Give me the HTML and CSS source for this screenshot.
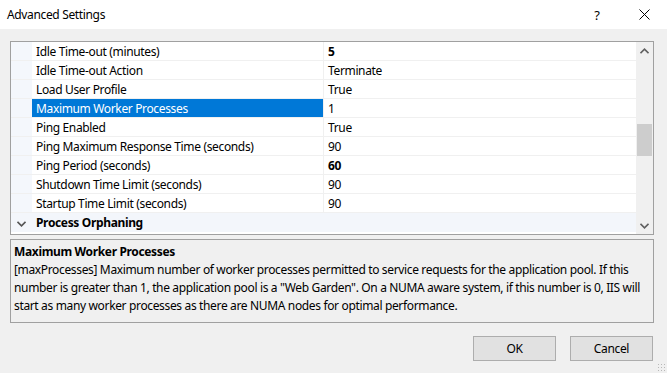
FILE: index.html
```html
<!DOCTYPE html>
<html>
<head>
<meta charset="utf-8">
<link rel="stylesheet" href="styles.css">
</head>
<body>
<div class="dialog">
  <div class="titlebar">
    <span class="title">Advanced Settings</span>
    <span class="tb-help">?</span>
    <span class="tb-close">
      <svg width="11" height="11" viewBox="0 0 11 11"><path d="M0.5 0.5 L10.5 10.5 M10.5 0.5 L0.5 10.5" stroke="#000" stroke-width="1" fill="none"/></svg>
    </span>
  </div>
  <div class="content">
    <div class="grid">
      <div class="rows">
        <div class="row"><div class="gut"></div><div class="name">Idle Time-out (minutes)</div><div class="val bold">5</div></div>
        <div class="row"><div class="gut"></div><div class="name">Idle Time-out Action</div><div class="val">Terminate</div></div>
        <div class="row"><div class="gut"></div><div class="name">Load User Profile</div><div class="val">True</div></div>
        <div class="row selected"><div class="gut"></div><div class="name">Maximum Worker Processes</div><div class="val">1</div></div>
        <div class="row"><div class="gut"></div><div class="name">Ping Enabled</div><div class="val">True</div></div>
        <div class="row"><div class="gut"></div><div class="name">Ping Maximum Response Time (seconds)</div><div class="val">90</div></div>
        <div class="row"><div class="gut"></div><div class="name">Ping Period (seconds)</div><div class="val bold">60</div></div>
        <div class="row"><div class="gut"></div><div class="name">Shutdown Time Limit (seconds)</div><div class="val">90</div></div>
        <div class="row"><div class="gut"></div><div class="name">Startup Time Limit (seconds)</div><div class="val">90</div></div>
        <div class="row category"><div class="gut chev"><svg width="9" height="6" viewBox="0 0 9 6"><path d="M0.5 0.8 L4.5 4.8 L8.5 0.8" stroke="#555" stroke-width="1.6" fill="none"/></svg></div><div class="cat-name">Process Orphaning</div></div>
      </div>
      <div class="scrollbar">
        <div class="sb-arrow"><svg width="9" height="6" viewBox="0 0 9 6"><path d="M0.5 5.2 L4.5 1.2 L8.5 5.2" stroke="#606060" stroke-width="1.6" fill="none"/></svg></div>
        <div class="sb-track"><div class="sb-thumb"></div></div>
        <div class="sb-arrow"><svg width="9" height="6" viewBox="0 0 9 6"><path d="M0.5 0.8 L4.5 4.8 L8.5 0.8" stroke="#606060" stroke-width="1.6" fill="none"/></svg></div>
      </div>
    </div>
    <div class="desc">
      <div class="desc-title">Maximum Worker Processes</div>
      <div class="desc-text">[maxProcesses] Maximum number of worker processes permitted to service requests for the application pool. If this number is greater than 1, the application pool is a "Web Garden". On a NUMA aware system, if this number is 0, IIS will start as many worker processes as there are NUMA nodes for optimal performance.</div>
    </div>
    <div class="buttons">
      <button class="btn">OK</button>
      <button class="btn">Cancel</button>
    </div>
  </div>
  <div class="grip"></div>
</div>
</body>
</html>
```
FILE: styles.css
```css
* { box-sizing: border-box; }
html, body { margin: 0; padding: 0; }
body {
  width: 667px;
  height: 373px;
  overflow: hidden;
  background: #f0f0f0;
  font-family: "Noto Sans", "Open Sans", sans-serif;
  font-size: 12px;
  letter-spacing: -0.35px;
  color: #000;
}
.dialog { position: relative; width: 667px; height: 373px; }
.titlebar {
  height: 29px;
  background: #fff;
  display: flex;
  align-items: center;
  padding-left: 7px;
}
.title { flex: 1; font-size: 12px; }
.tb-help { width: 46px; text-align: center; font-size: 13px; margin-right: 4px; }
.tb-close { width: 40px; display: flex; justify-content: center; margin-right: 3px; }
.content { padding: 12px 13px 0 10px; }
.grid {
  height: 194px;
  border: 1px solid #a0a0a0;
  background: #fff;
  display: flex;
}
.rows { flex: 1; display: flex; flex-direction: column; }
.row {
  height: 19px;
  display: grid;
  grid-template-columns: 21px 291px 1fr;
  grid-template-rows: 18px;
  border-bottom: 1px solid #f0f0f0;
  line-height: 20px;
  white-space: nowrap;
}
.row > div { overflow: hidden; }
.gut { background: #f4f7fc; }
.name { padding-left: 4px; }
.val { border-left: 1px solid #f0f0f0; padding-left: 4px; }
.bold { font-weight: bold; }
.selected .name { background: #0078d7; color: #fff; }
.category { background: #f3f6fb; display: flex; border-bottom: none; }
.category .gut { width: 21px; background: transparent; display: flex; align-items: center; justify-content: center; padding-top: 2px; }
.cat-name { font-weight: bold; padding-left: 4px; }
.scrollbar {
  width: 17px;
  background: #f0f0f0;
  display: flex;
  flex-direction: column;
}
.sb-arrow { height: 17px; display: flex; align-items: center; justify-content: center; }
.sb-track { flex: 1; padding-top: 65px; display: flex; justify-content: center; }
.sb-thumb { width: 15px; height: 32px; background: #cdcdcd; }
.desc {
  margin-top: 4px;
  height: 84px;
  border: 1px solid #a0a0a0;
  background: #f0f0f0;
  padding: 3px 6px 0 3px;
}
.desc-title { font-weight: bold; line-height: 18px; }
.desc-text { line-height: 18px; }
.buttons {
  display: flex;
  justify-content: flex-end;
  gap: 14px;
  margin-top: 13px;
  padding-right: 1px;
}
.btn {
  width: 83px;
  height: 25px;
  background: #e1e1e1;
  border: 1px solid #adadad;
  font-family: inherit;
  font-size: 12px;
  letter-spacing: -0.35px;
  color: #000;
  padding: 0;
}
.grip {
  position: absolute;
  right: 2px;
  bottom: 2px;
  width: 8px;
  height: 8px;
  background-image: radial-gradient(circle, #b8b8b8 0.8px, transparent 1px);
  background-size: 3px 3px;
}
```
